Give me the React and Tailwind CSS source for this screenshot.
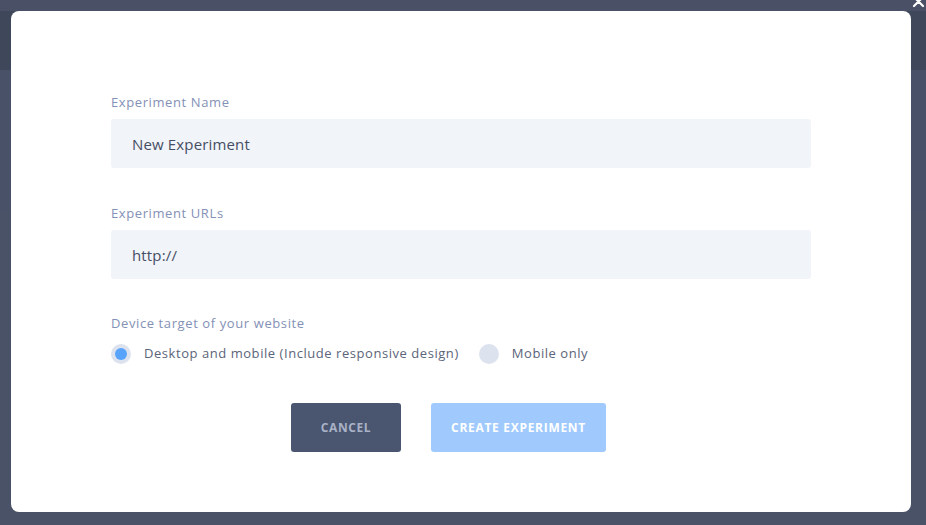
import React, { useState } from "react";

const font = { fontFamily: '"Open Sans", "Liberation Sans", sans-serif' };

const Field = ({ label, value, onChange }) => (
  <div className="flex flex-col">
    <label className="mb-[8px] text-[13px] leading-[18px] tracking-[0.6px] text-[#8491b6]">{label}</label>
    <input
      value={value}
      onChange={(e) => onChange(e.target.value)}
      className="h-[49px] w-[700px] rounded-[3px] bg-[#f1f4f9] px-[21px] text-[15px] tracking-[0.15px] text-[#454e64] outline-none"
    />
  </div>
);

const Radio = ({ checked, label, onClick }) => (
  <button onClick={onClick} className="flex items-center gap-[13px]">
    <span className="flex h-[20px] w-[20px] items-center justify-center rounded-full bg-[#dce2ee]">
      {checked && <span className="h-[12px] w-[12px] rounded-full bg-[#58a4fc]" />}
    </span>
    <span className="text-[13px] tracking-[0.55px] text-[#5b6479]">{label}</span>
  </button>
);

export default function App() {
  const [name, setName] = useState("New Experiment");
  const [url, setUrl] = useState("http://");
  const [device, setDevice] = useState("both");

  return (
    <div className="relative h-[525px] w-[926px] overflow-hidden bg-[#4a5268]" style={font}>
      {/* page behind the overlay */}
      <div className="h-[11px] bg-[#4a5166]" />
      <div className="h-[59px] bg-[#3f475a]" />
      <div className="h-[140px] bg-[#485168]" />

      {/* close */}
      <svg
        className="absolute right-[1px] top-[-5px]"
        width="13"
        height="13"
        viewBox="0 0 13 13"
        stroke="white"
        strokeWidth="2.2"
        strokeLinecap="round"
      >
        <path d="M2 2 L11 11 M11 2 L2 11" />
      </svg>

      {/* modal */}
      <div className="absolute left-[11px] top-[11px] flex h-[501px] w-[900px] flex-col rounded-[8px] bg-white pl-[100px] pt-[82px]">
        <div className="flex flex-col gap-[36px]">
          <Field label="Experiment Name" value={name} onChange={setName} />
          <Field label="Experiment URLs" value={url} onChange={setUrl} />
        </div>

        <div className="mt-[35px] flex flex-col">
          <div className="text-[13px] leading-[18px] tracking-[0.6px] text-[#8491b6]">Device target of your website</div>
          <div className="mt-[12px] flex items-center gap-[20px]">
            <Radio
              checked={device === "both"}
              label="Desktop and mobile (Include responsive design)"
              onClick={() => setDevice("both")}
            />
            <Radio checked={device === "mobile"} label="Mobile only" onClick={() => setDevice("mobile")} />
          </div>
        </div>

        <div className="mt-[39px] flex gap-[30px] pl-[180px]">
          <button className="h-[49px] w-[110px] rounded-[3px] bg-[#4a5570] text-[12px] font-bold tracking-[0.6px] text-[#a9b2c6]">
            CANCEL
          </button>
          <button className="h-[49px] w-[175px] rounded-[3px] bg-[#a0cafd] text-[12px] font-bold tracking-[0.7px] text-white">
            CREATE EXPERIMENT
          </button>
        </div>
      </div>
    </div>
  );
}
